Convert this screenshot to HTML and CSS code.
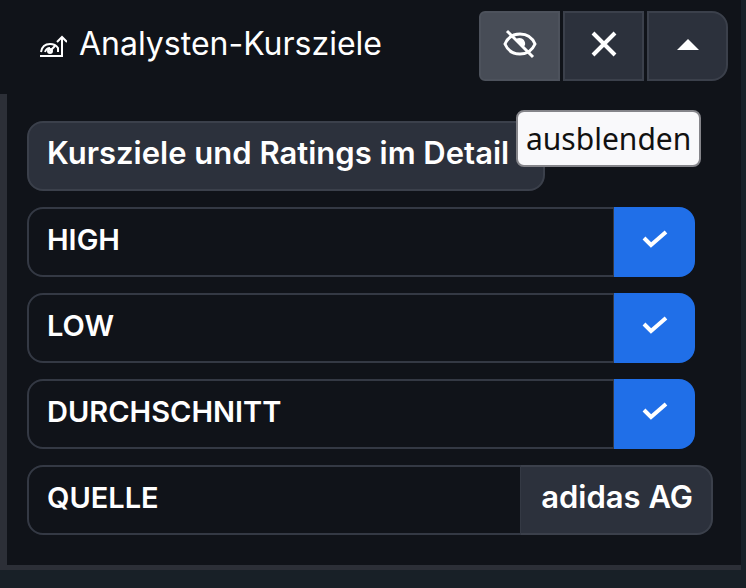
FILE: index.html
```html
<!DOCTYPE html>
<html lang="de">
<head>
<meta charset="utf-8">
<meta name="viewport" content="width=device-width, initial-scale=1">
<title>Analysten-Kursziele</title>
<link rel="stylesheet" href="styles.css">
</head>
<body>
<section class="panel">
  <header class="panel-header">
    <svg class="title-icon" viewBox="0 0 28 24" aria-hidden="true">
      <path d="M1 22H23V4M18 8L23 3L28 8"/>
      <path d="M2 18C3 12 7 10 11 10C14 10 17 11 19 14V18"/>
      <path d="M6 18C7 15 9 14 11 14M10 18L16 12"/>
      <circle cx="11" cy="17" r="2"/>
    </svg>
    <h1 class="title">Analysten-Kursziele</h1>
    <div class="tools">
      <div class="tool-wrap">
        <button class="tool tool-first" type="button" aria-label="Ausblenden" aria-describedby="hide-tip">
          <svg class="icon-eye" viewBox="0 0 34 30" aria-hidden="true">
            <path d="M2 15C5 8 11 5 17 5S29 8 32 15C29 22 23 25 17 25S5 22 2 15Z"/>
            <path class="eye-pupil" d="M13 10C18 7 23 11 22 16L20 19Z"/>
            <path d="M4 2L30 28"/>
          </svg>
        </button>
        <span class="tooltip" id="hide-tip" role="tooltip">ausblenden</span>
      </div>
      <button class="tool" type="button" aria-label="Schließen">
        <svg class="icon-close" viewBox="0 0 26 26" aria-hidden="true"><path d="M2 2L24 24M24 2L2 24"/></svg>
      </button>
      <button class="tool tool-last" type="button" aria-label="Einklappen">
        <svg class="icon-caret" viewBox="0 0 22 11" aria-hidden="true"><path d="M0 11L11 0L22 11Z"/></svg>
      </button>
    </div>
  </header>
  <div class="panel-body">
    <button class="detail" type="button">Kursziele und Ratings im Detail</button>
    <div class="row">
      <label class="row-label" for="high">HIGH</label>
      <span class="toggle">
        <input id="high" type="checkbox" checked>
        <svg viewBox="0 0 26 18" aria-hidden="true"><path d="M2 8L9 15L24 2"/></svg>
      </span>
    </div>
    <div class="row">
      <label class="row-label" for="low">LOW</label>
      <span class="toggle">
        <input id="low" type="checkbox" checked>
        <svg viewBox="0 0 26 18" aria-hidden="true"><path d="M2 8L9 15L24 2"/></svg>
      </span>
    </div>
    <div class="row">
      <label class="row-label" for="average">DURCHSCHNITT</label>
      <span class="toggle">
        <input id="average" type="checkbox" checked>
        <svg viewBox="0 0 26 18" aria-hidden="true"><path d="M2 8L9 15L24 2"/></svg>
      </span>
    </div>
    <div class="row row-source">
      <span class="row-label" id="source-label">QUELLE</span>
      <button class="source" type="button" aria-describedby="source-label">adidas AG</button>
    </div>
  </div>
</section>
</body>
</html>
```

FILE: styles.css
```css
* {
  box-sizing: border-box;
}

body {
  margin: 0;
  min-height: 100vh;
  background: #182027;
  color: #fff;
  font-family: Inter, "Liberation Sans", sans-serif;
}

button {
  margin: 0;
  color: inherit;
  font: inherit;
  cursor: pointer;
}

svg {
  fill: none;
  stroke: #fff;
}

.panel {
  margin-right: 5px;
  background: #101319;
}

.panel-header {
  display: flex;
  align-items: center;
  padding: 11px 13px 13px 39px;
}

.title-icon {
  width: 28px;
  height: 24px;
  margin-right: 12px;
  stroke-width: 2;
}

.title {
  flex: 1;
  margin: 0;
  padding-bottom: 4px;
  font-size: 32px;
  font-weight: 400;
  line-height: 36px;
  white-space: nowrap;
}

.tools {
  display: flex;
  gap: 3px;
}

.tool-wrap {
  position: relative;
}

.tool {
  display: flex;
  align-items: center;
  justify-content: center;
  width: 81px;
  height: 70px;
  padding: 0 0 4px;
  border: 2px solid #3b404b;
  background: #2c313c;
}

.tool-first {
  border-color: #4d525c;
  border-radius: 6px 0 0 6px;
  background: #474c56;
}

.tool-last {
  border-radius: 0 16px 16px 0;
}

.icon-eye {
  width: 34px;
  height: 30px;
  stroke-width: 3;
}

.eye-pupil {
  fill: #fff;
  stroke: none;
}

.icon-close {
  width: 26px;
  height: 26px;
  stroke-width: 4;
}

.icon-caret {
  width: 22px;
  height: 11px;
  fill: #fff;
  stroke: none;
}

.tooltip {
  position: absolute;
  z-index: 1;
  top: 99px;
  left: 37px;
  padding: 8px;
  border: 2px solid #85858a;
  border-radius: 8px;
  background: #f9f9fb;
  color: #111;
  font-family: "Noto Sans", sans-serif;
  font-size: 30px;
  line-height: 37px;
  white-space: nowrap;
}

.panel-body {
  display: flex;
  flex-direction: column;
  gap: 16px;
  padding: 27px 46px 30px 20px;
  border-left: 7px solid #2c2f37;
  border-bottom: 5px solid #2c2f37;
  font-size: 31px;
  font-weight: 600;
  line-height: 36px;
}

.detail {
  align-self: flex-start;
  padding: 12px 34px 18px 18px;
  border: 2px solid #3b404b;
  border-radius: 16px;
  background: #2c313c;
  white-space: nowrap;
}

.row {
  display: flex;
  height: 70px;
}

.row-source {
  margin-right: -18px;
}

.row-label {
  flex: 1;
  padding: 13px 18px 17px;
  border: 2px solid #343944;
  border-right-width: 1px;
  border-radius: 16px 0 0 16px;
  font-size: 29px;
}

.toggle {
  display: grid;
  place-items: center;
  width: 81px;
}

.toggle input,
.toggle svg {
  grid-area: 1 / 1;
}

.toggle input {
  width: 100%;
  height: 100%;
  margin: 0;
  appearance: none;
  border-radius: 0 16px 16px 0;
  background: #343944;
  cursor: pointer;
}

.toggle input:checked {
  background: #206fe8;
}

.toggle svg {
  width: 26px;
  height: 18px;
  margin-bottom: 6px;
  stroke-width: 4;
  pointer-events: none;
}

.source {
  padding: 0 18px 6px 20px;
  border: 2px solid #3b404b;
  border-left-width: 0;
  border-radius: 0 16px 16px 0;
  background: #2c313c;
}
```
